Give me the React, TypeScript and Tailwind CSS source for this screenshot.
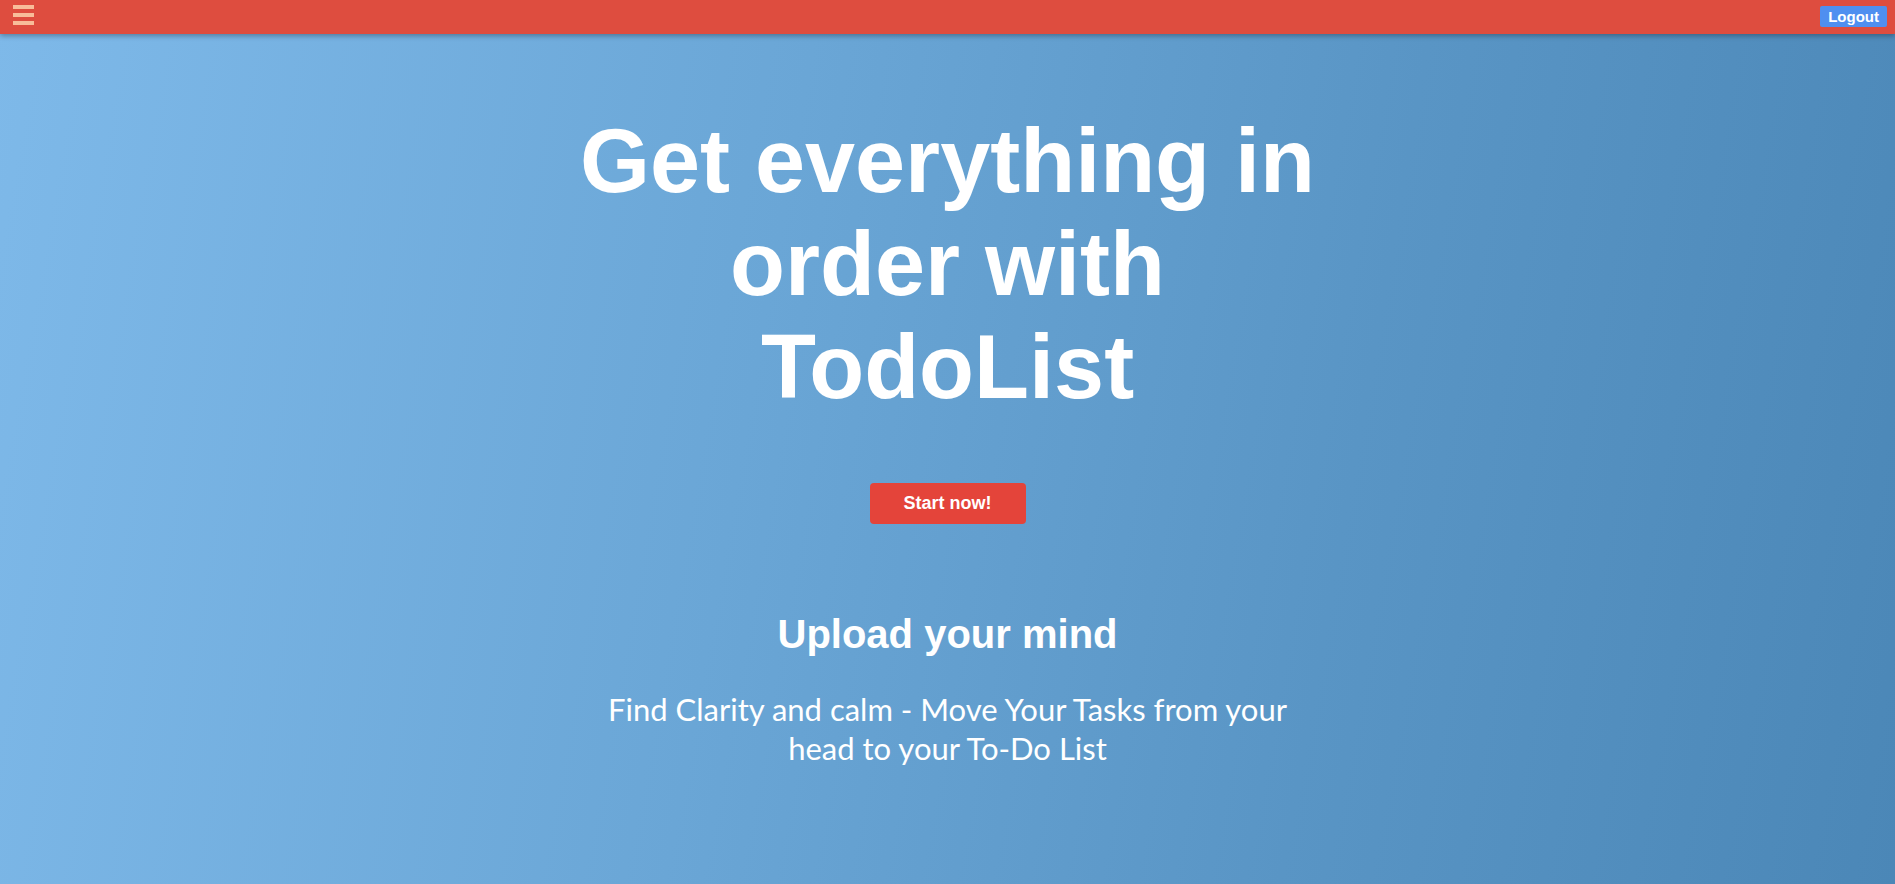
export default function App() {
  return (
    <div className="min-h-[884px] bg-[linear-gradient(100deg,#7eb9e9_0%,#6aa6d6_40%,#5995c5_70%,#4b87b7_100%)] font-['Liberation_Sans',Arial,sans-serif] text-white">
      <header className="flex h-[34px] items-start justify-between bg-[#de4d3f] shadow-[0_2px_5px_rgba(0,0,0,0.3)]">
        <button className="ml-[13px] mt-[5px] flex w-[21px] flex-col gap-[4.5px]">
          <span className="h-[3.5px] w-full bg-[#f8bd9a]" />
          <span className="h-[3.5px] w-full bg-[#f8bd9a]" />
          <span className="h-[3.5px] w-full bg-[#f8bd9a]" />
        </button>
        <button className="mr-[8px] mt-[6px] h-[21px] rounded-[2px] bg-[#4f8ff0] px-[8px] text-[15px] font-bold leading-[21px] text-white">
          Logout
        </button>
      </header>

      <main className="flex flex-col items-center pt-[76px]">
        <h1 className="max-w-[820px] text-center text-[90px] font-bold leading-[103px]">
          Get everything in order with TodoList
        </h1>
        <button className="mt-[64px] h-[41px] w-[156px] rounded-[4px] bg-[#e4443a] text-[18px] font-bold text-white">
          Start now!
        </button>
        <h2 className="mt-[87px] text-center text-[40px] font-bold leading-[46px]">
          Upload your mind
        </h2>
        <p className="mt-[33px] max-w-[720px] text-center font-['Lato',sans-serif] text-[31px] leading-[39px]">
          Find Clarity and calm - Move Your Tasks from your head to your To-Do List
        </p>
      </main>
    </div>
  );
}
